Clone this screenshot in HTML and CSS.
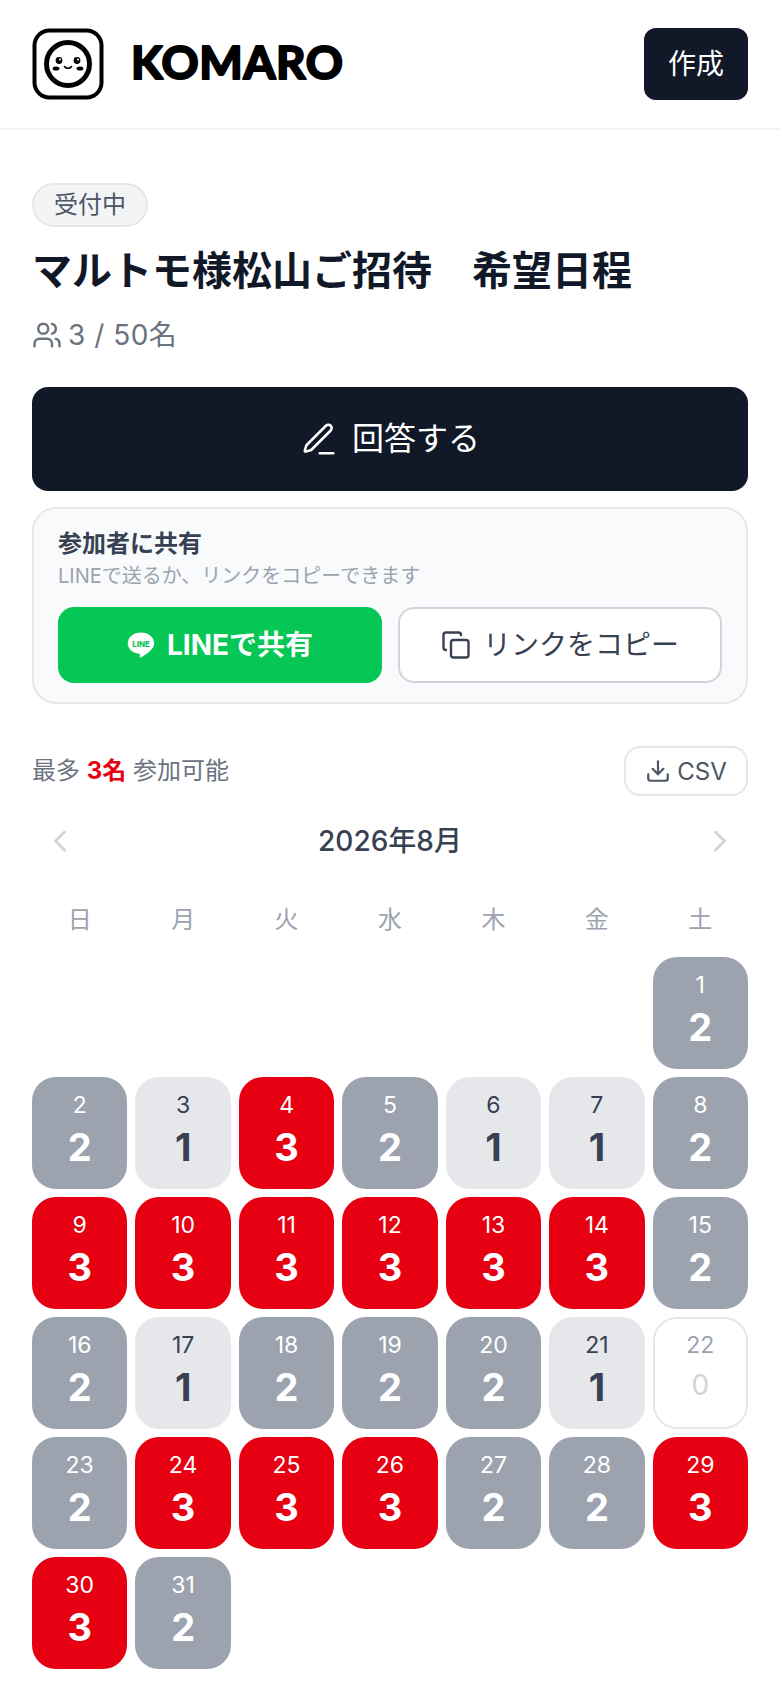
FILE: index.html
```html
<!DOCTYPE html>
<html lang="ja">
<head>
<meta charset="utf-8">
<title>マルトモ様松山ご招待　希望日程</title>
<link rel="stylesheet" href="styles.css">
</head>
<body>
<header class="header">
  <div class="brand">
    <svg class="logo-mark" viewBox="0 0 72 72">
      <rect x="2.500" y="2.500" width="67" height="67" rx="15" fill="#fff" stroke="#000" stroke-width="4"/>
      <circle cx="36" cy="36" r="21.500" fill="#fff" stroke="#000" stroke-width="5"/>
      <circle cx="27" cy="32.500" r="3.400" fill="#000"/>
      <circle cx="45" cy="32.500" r="3.400" fill="#000"/>
      <circle cx="28" cy="31.500" r="1" fill="#fff"/>
      <circle cx="46" cy="31.500" r="1" fill="#fff"/>
      <ellipse cx="24" cy="40.500" rx="3.400" ry="2" fill="#000"/>
      <ellipse cx="48" cy="40.500" rx="3.400" ry="2" fill="#000"/>
      <path d="M32.500 38.500c1.500 2.400 5.500 2.400 7 0" fill="none" stroke="#000" stroke-width="1.600" stroke-linecap="round"/>
    </svg>
    <svg class="logo-word" viewBox="0 0 240 72"><text x="1" y="51" class="logo-text" textLength="212" lengthAdjust="spacing">KOMARO</text></svg>
  </div>
  <button class="create-btn"><span class="label">作成</span></button>
</header>
<main class="main">
  <span class="badge">受付中</span>
  <h1 class="title">マルトモ様松山ご招待　希望日程</h1>
  <p class="members">
    <svg class="icon icon-users" viewBox="0 0 24 24"><path d="M16 21v-2a4 4 0 0 0-4-4H6a4 4 0 0 0-4 4v2"/><circle cx="9" cy="7" r="4"/><path d="M22 21v-2a4 4 0 0 0-3-3.870"/><path d="M16 3.130a4 4 0 0 1 0 7.750"/></svg>
    <span class="label">3 / 50名</span>
  </p>
  <button class="answer-btn">
    <svg class="icon icon-pen" viewBox="0 0 24 24"><path d="M12.500 21H21"/><path d="M16.376 3.622a1 1 0 0 1 3.002 3.002L7.368 18.635a2 2 0 0 1-.855.506l-2.872.838a.5.5 0 0 1-.62-.62l.838-2.872a2 2 0 0 1 .506-.854z"/></svg>
    <span class="label label-high">回答する</span>
  </button>
  <section class="share">
    <h2 class="share-title">参加者に共有</h2>
    <p class="share-sub">LINEで送るか、リンクをコピーできます</p>
    <div class="share-actions">
      <button class="line-btn">
        <svg class="icon-line" viewBox="0 0 30 30"><path d="M15 1.500C7 1.500.8 6.600.8 13c0 5.700 5 10.400 11.700 11.300.5.100 1.100.3 1.300.7.100.4.100.9 0 1.300l-.2 1.200c-.1.4-.3 1.400 1.200.8 1.500-.7 8.200-4.800 11.200-8.200 2-2.300 3-4.600 3-7.100C29.200 6.600 23 1.500 15 1.500z" fill="#fff"/><text x="15" y="17" class="line-glyph">LINE</text></svg>
        <span class="label">LINEで共有</span>
      </button>
      <button class="copy-btn">
        <svg class="icon icon-copy" viewBox="0 0 24 24"><rect x="8" y="8" width="14" height="14" rx="2"/><path d="M4 16c-1.100 0-2-.9-2-2V4c0-1.100.9-2 2-2h10c1.100 0 2 .9 2 2"/></svg>
        <span class="label">リンクをコピー</span>
      </button>
    </div>
  </section>
  <div class="summary">
    <p class="summary-text">最多 <strong class="summary-max">3名</strong> 参加可能</p>
    <button class="csv-btn">
      <svg class="icon icon-download" viewBox="0 0 24 24"><path d="M21 15v4a2 2 0 0 1-2 2H5a2 2 0 0 1-2-2v-4"/><polyline points="7 10 12 15 17 10"/><line x1="12" y1="15" x2="12" y2="3"/></svg>
      <span>CSV</span>
    </button>
  </div>
  <div class="month-nav">
    <svg class="icon icon-chev" viewBox="0 0 24 24"><path d="m15 18-6-6 6-6"/></svg>
    <span class="month-label label">2026年8月</span>
    <svg class="icon icon-chev" viewBox="0 0 24 24"><path d="m9 18 6-6-6-6"/></svg>
  </div>
  <div class="weekdays">
    <span>日</span><span>月</span><span>火</span><span>水</span><span>木</span><span>金</span><span>土</span>
  </div>
  <div class="calendar">
    <div class="day mid first"><span class="date">1</span><span class="count">2</span></div>
    <div class="day mid"><span class="date">2</span><span class="count">2</span></div>
    <div class="day low"><span class="date">3</span><span class="count">1</span></div>
    <div class="day top"><span class="date">4</span><span class="count">3</span></div>
    <div class="day mid"><span class="date">5</span><span class="count">2</span></div>
    <div class="day low"><span class="date">6</span><span class="count">1</span></div>
    <div class="day low"><span class="date">7</span><span class="count">1</span></div>
    <div class="day mid"><span class="date">8</span><span class="count">2</span></div>
    <div class="day top"><span class="date">9</span><span class="count">3</span></div>
    <div class="day top"><span class="date">10</span><span class="count">3</span></div>
    <div class="day top"><span class="date">11</span><span class="count">3</span></div>
    <div class="day top"><span class="date">12</span><span class="count">3</span></div>
    <div class="day top"><span class="date">13</span><span class="count">3</span></div>
    <div class="day top"><span class="date">14</span><span class="count">3</span></div>
    <div class="day mid"><span class="date">15</span><span class="count">2</span></div>
    <div class="day mid"><span class="date">16</span><span class="count">2</span></div>
    <div class="day low"><span class="date">17</span><span class="count">1</span></div>
    <div class="day mid"><span class="date">18</span><span class="count">2</span></div>
    <div class="day mid"><span class="date">19</span><span class="count">2</span></div>
    <div class="day mid"><span class="date">20</span><span class="count">2</span></div>
    <div class="day low"><span class="date">21</span><span class="count">1</span></div>
    <div class="day none"><span class="date">22</span><span class="count">0</span></div>
    <div class="day mid"><span class="date">23</span><span class="count">2</span></div>
    <div class="day top"><span class="date">24</span><span class="count">3</span></div>
    <div class="day top"><span class="date">25</span><span class="count">3</span></div>
    <div class="day top"><span class="date">26</span><span class="count">3</span></div>
    <div class="day mid"><span class="date">27</span><span class="count">2</span></div>
    <div class="day mid"><span class="date">28</span><span class="count">2</span></div>
    <div class="day top"><span class="date">29</span><span class="count">3</span></div>
    <div class="day top"><span class="date">30</span><span class="count">3</span></div>
    <div class="day mid"><span class="date">31</span><span class="count">2</span></div>
  </div>
</main>
</body>
</html>
```

FILE: styles.css
```css
* { box-sizing: border-box; }
html, body { margin: 0; padding: 0; background: #fff; }
body {
  width: 780px;
  height: 1688px;
  overflow: hidden;
  font-family: Inter, "Noto Sans CJK JP", sans-serif;
  color: #111827;
}
button { font-family: inherit; cursor: pointer; }
h1, h2, p { margin: 0; }

.icon { fill: none; stroke: currentColor; stroke-width: 2; stroke-linecap: round; stroke-linejoin: round; flex: none; }
.label { margin-bottom: 4px; }
.label-high { margin-bottom: 6px; }

.header {
  height: 130px;
  padding: 28px 32px 0;
  border-bottom: 2px solid #f3f4f6;
  display: flex;
  justify-content: space-between;
  align-items: flex-start;
}
.brand { display: flex; align-items: center; gap: 26px; height: 72px; }
.logo-mark { width: 72px; height: 72px; flex: none; }
.logo-word { width: 240px; height: 72px; flex: none; }
.logo-text {
  font-family: Lato, sans-serif;
  font-weight: 700;
  font-size: 46px;
  fill: #000;
  stroke: #000;
  stroke-width: 2.200;
  stroke-linejoin: round;
}
.create-btn {
  width: 104px;
  height: 72px;
  border: 0;
  border-radius: 12px;
  background: #111827;
  color: #fff;
  font-size: 28px;
  display: flex;
  align-items: center;
  justify-content: center;
}

.main { padding: 53px 32px 0; }
.badge {
  display: inline-block;
  height: 44px;
  padding: 0 20px;
  border: 2px solid #e5e7eb;
  border-radius: 22px;
  background: #f3f4f6;
  color: #4b5563;
  font-size: 24px;
  line-height: 40px;
  vertical-align: top;
}
.title {
  margin-top: 16px;
  font-size: 40px;
  line-height: 56px;
  font-weight: 700;
}
.members {
  margin-top: 16px;
  display: flex;
  align-items: center;
  gap: 6px;
  height: 40px;
  color: #6b7280;
  font-size: 28px;
  letter-spacing: 0.5px;
}
.icon-users { width: 30px; height: 30px; }

.answer-btn {
  margin-top: 32px;
  width: 100%;
  height: 104px;
  border: 0;
  border-radius: 16px;
  background: #111827;
  color: #fff;
  font-size: 32px;
  display: flex;
  align-items: center;
  justify-content: center;
  gap: 14px;
}
.icon-pen { width: 38px; height: 38px; stroke-width: 1.600; }

.share {
  margin-top: 16px;
  height: 197px;
  padding: 19px 24px 0;
  border: 2px solid #e5e7eb;
  border-radius: 24px;
  background: #f9fafb;
}
.share-title { font-size: 24px; line-height: 32px; font-weight: 700; color: #374151; }
.share-sub { margin-top: 2px; font-size: 20px; line-height: 28px; color: #9ca3af; }
.share-actions { margin-top: 17px; display: grid; grid-template-columns: 1fr 1fr; gap: 16px; }
.line-btn, .copy-btn {
  height: 76px;
  border-radius: 16px;
  font-size: 28px;
  display: flex;
  align-items: center;
  justify-content: center;
  gap: 12px;
}
.line-btn { border: 0; background: #06c755; color: #fff; font-weight: 700; }
.icon-line { width: 28px; height: 28px; flex: none; }
.line-glyph {
  font-family: Inter, sans-serif;
  font-size: 8.500px;
  font-weight: 800;
  fill: #06c755;
  text-anchor: middle;
}
.copy-btn { border: 2px solid #d1d5db; background: #fff; color: #374151; }
.icon-copy { width: 30px; height: 30px; stroke-width: 1.900; }

.summary { margin-top: 42px; height: 50px; display: flex; justify-content: space-between; align-items: center; }
.summary-text { font-size: 24px; color: #6b7280; margin-bottom: 6px; }
.summary-max { color: #e60012; font-weight: 700; }
.csv-btn {
  width: 124px;
  height: 50px;
  border: 2px solid #e5e7eb;
  border-radius: 16px;
  background: #fff;
  color: #4b5563;
  font-size: 24px;
  display: flex;
  align-items: center;
  justify-content: center;
  gap: 6px;
}
.icon-download { width: 26px; height: 26px; }

.month-nav {
  margin-top: 17px;
  height: 56px;
  padding: 0 10px;
  display: flex;
  justify-content: space-between;
  align-items: center;
  color: #d1d5db;
}
.month-label { color: #374151; font-size: 28px; font-weight: 500; }
.icon-chev { width: 36px; height: 36px; }

.weekdays {
  margin-top: 35px;
  display: grid;
  grid-template-columns: repeat(7, 1fr);
  column-gap: 8px;
  color: #9ca3af;
  font-size: 24px;
  line-height: 32px;
  text-align: center;
}
.calendar {
  margin-top: 21px;
  display: grid;
  grid-template-columns: repeat(7, 1fr);
  grid-auto-rows: 112px;
  gap: 8px;
}
.first { grid-column-start: 7; }
.day {
  border-radius: 24px;
  display: flex;
  flex-direction: column;
  align-items: center;
  padding-top: 12px;
}
.date { font-size: 23px; line-height: 32px; }
.count { margin-top: 2px; font-size: 38px; line-height: 48px; font-weight: 700; }
.top { background: #e60012; color: #fff; }
.mid { background: #9ca3af; color: #fff; }
.low { background: #e5e7eb; color: #374151; }
.none { background: #fff; border: 2px solid #e5e7eb; color: #9ca3af; padding-top: 10px; }
.none .count { margin-top: 0; color: #d1d5db; font-size: 28px; font-weight: 400; }
```
